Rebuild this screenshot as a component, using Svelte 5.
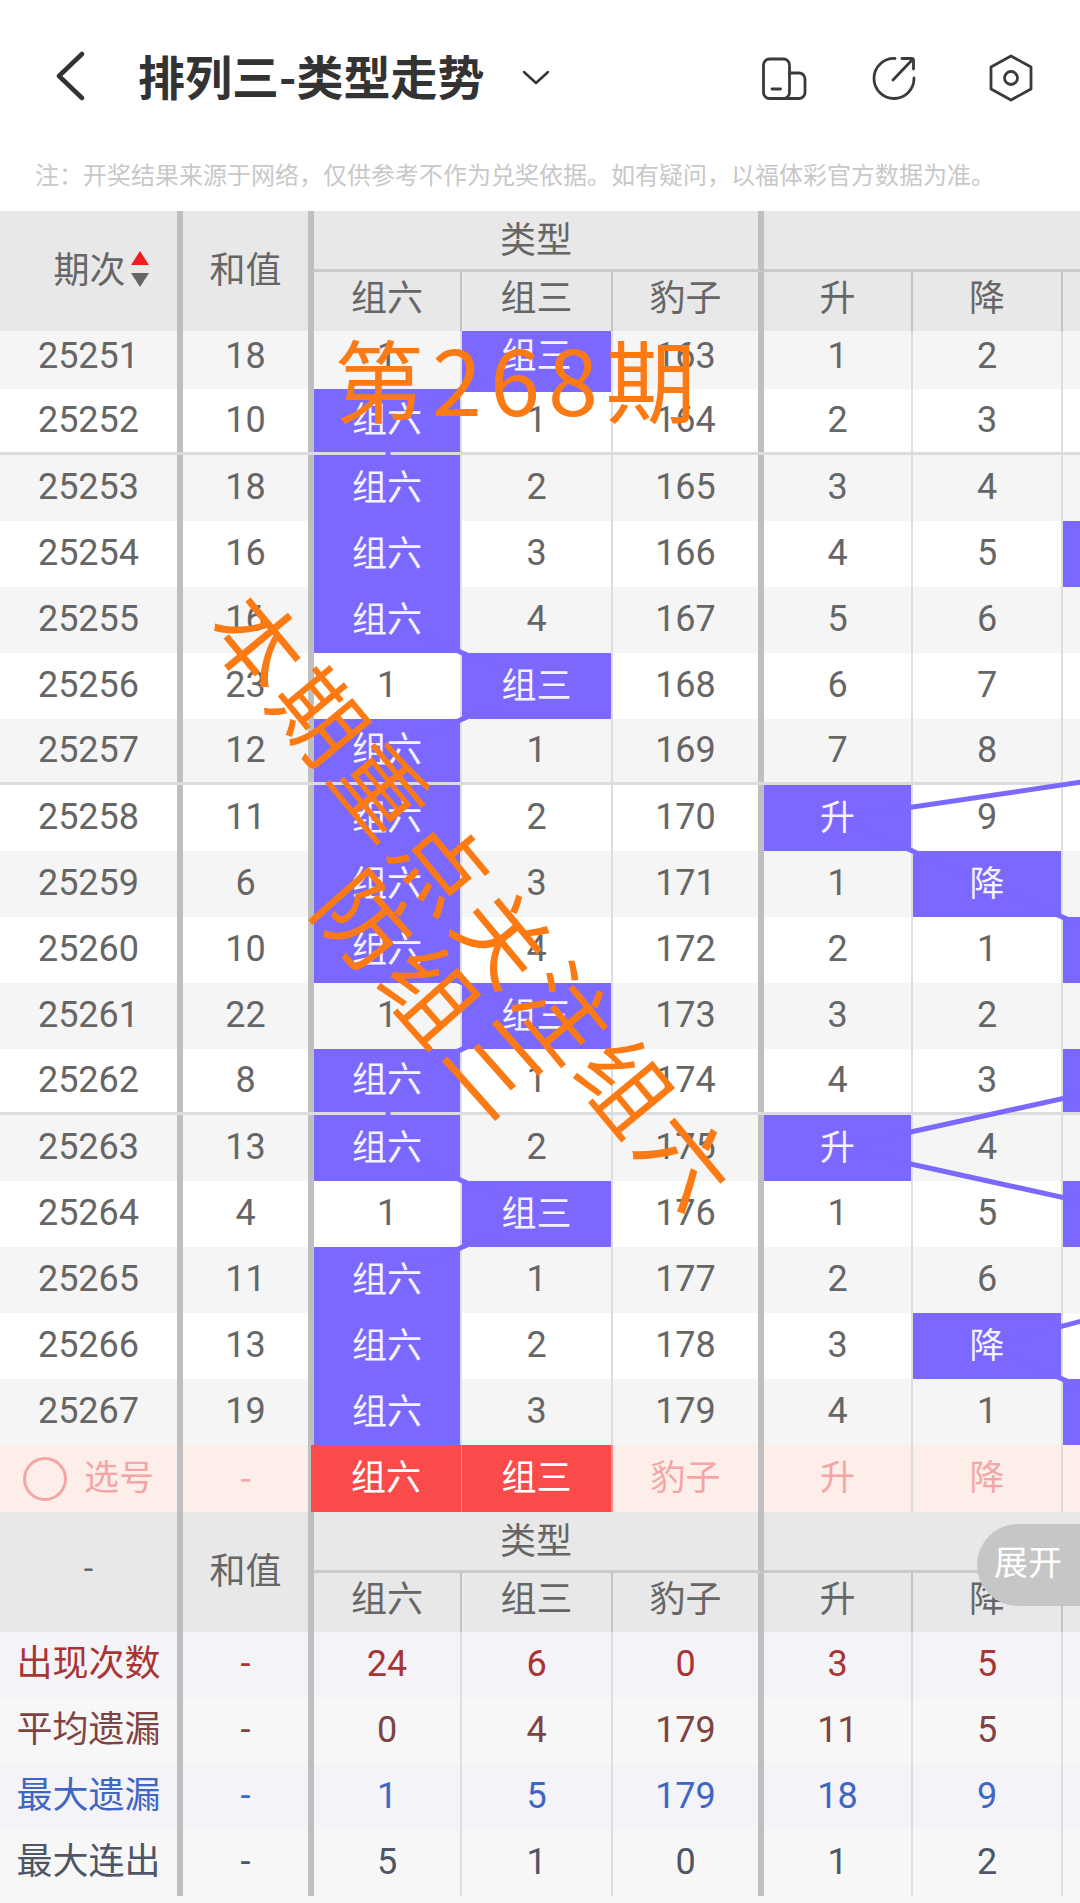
<script>
    // trend rows: hit marks the cell drawn in purple, everything else shows the miss count
    const rows = [
        [25251, 18, 1, "组三", 163, 1, 2],
        [25252, 10, "组六", 1, 164, 2, 3],
        [25253, 18, "组六", 2, 165, 3, 4],
        [25254, 16, "组六", 3, 166, 4, 5, true],
        [25255, 16, "组六", 4, 167, 5, 6],
        [25256, 23, 1, "组三", 168, 6, 7],
        [25257, 12, "组六", 1, 169, 7, 8],
        [25258, 11, "组六", 2, 170, "升", 9],
        [25259, 6, "组六", 3, 171, 1, "降"],
        [25260, 10, "组六", 4, 172, 2, 1, true],
        [25261, 22, 1, "组三", 173, 3, 2],
        [25262, 8, "组六", 1, 174, 4, 3, true],
        [25263, 13, "组六", 2, 175, "升", 4],
        [25264, 4, 1, "组三", 176, 1, 5, true],
        [25265, 11, "组六", 1, 177, 2, 6],
        [25266, 13, "组六", 2, 178, 3, "降"],
        [25267, 19, "组六", 3, 179, 4, 1, true],
    ];

    const stats = [
        { label: "出现次数", tone: "red", values: [24, 6, 0, 3, 5] },
        { label: "平均遗漏", tone: "brown", values: [0, 4, 179, 11, 5] },
        { label: "最大遗漏", tone: "blue", values: [1, 5, 179, 18, 9] },
        { label: "最大连出", tone: "slate", values: [5, 1, 0, 1, 2] },
    ];

    const subHeads = ["组六", "组三", "豹子", "升", "降"];

    // column centres in px, row centres relative to the top of the data block
    const colX = [388, 537, 686, 838, 987, 1138];
    const rowY = (i) => (i === 0 ? 25 : 58 + 66 * (i - 1) + 33);

    function isHit(v) {
        return typeof v === "string";
    }

    function hitCol(row) {
        return isHit(row[2]) ? 0 : 1;
    }

    let typeLinks = $derived(
        rows.slice(1).map((row, i) => ({
            x1: colX[hitCol(rows[i])],
            y1: rowY(i),
            x2: colX[hitCol(row)],
            y2: rowY(i + 1),
        })),
    );

    const trendLinks = [
        { x1: colX[3], y1: rowY(7), x2: colX[4], y2: rowY(8) },
        { x1: colX[4], y1: rowY(8), x2: colX[5], y2: rowY(9) },
        { x1: colX[5], y1: rowY(11), x2: colX[3], y2: rowY(12) },
        { x1: colX[3], y1: rowY(12), x2: colX[5], y2: rowY(13) },
        { x1: colX[4], y1: rowY(15), x2: colX[5], y2: rowY(16) },
        { x1: colX[3], y1: rowY(7), x2: 1082, y2: rowY(7) - 36 },
        { x1: colX[4], y1: rowY(15), x2: 1082, y2: rowY(15) - 25 },
    ];
</script>

{#snippet tableHead(first)}
    <div class="grid head">
        <div class="hc span-2 thick first-col">{@render first()}</div>
        <div class="hc span-2 thick">和值</div>
        <div class="hc group thick">类型</div>
        <div class="hc group rest"></div>
        {#each subHeads as title, i}
            <div class="hc sub" class:thick={i === 2}>{title}</div>
        {/each}
        <div class="hc sub noline"></div>
    </div>
{/snippet}

{#snippet sortTitle()}
    <span class="sort-title">期次</span>
    <svg class="sort" width="20" height="36" viewBox="0 0 20 36">
        <path d="M10 0 L19 14 H1 Z" fill="#ef1c1c" />
        <path d="M1 22 H19 L10 36 Z" fill="#666" />
    </svg>
{/snippet}

{#snippet dash()}
    <span class="dash">-</span>
{/snippet}

<div class="page">
    <header class="nav">
        <svg class="back" width="36" height="50" viewBox="0 0 36 50">
            <path d="M30 3 L7 25 L30 47" fill="none" stroke="#333" stroke-width="4.5" stroke-linecap="round" stroke-linejoin="round" />
        </svg>
        <h1 class="title">排列三-类型走势</h1>
        <svg class="caret" width="28" height="16" viewBox="0 0 28 16">
            <path d="M2 3 L14 14 L26 3" fill="none" stroke="#333" stroke-width="2.4" stroke-linecap="round" stroke-linejoin="round" />
        </svg>
        <svg class="icon first" width="48" height="48" viewBox="0 0 48 48" fill="none" stroke="#3a3a3a" stroke-width="2.8" stroke-linecap="round" stroke-linejoin="round">
            <rect x="3.5" y="5" width="26" height="39.5" rx="6" />
            <path d="M29.5 19 H39 a6 6 0 0 1 6 6 V38.5 a6 6 0 0 1 -6 6 H23" />
            <path d="M12 35 H20.5" />
        </svg>
        <svg class="icon" width="48" height="48" viewBox="0 0 48 48" fill="none" stroke="#3a3a3a" stroke-width="2.8" stroke-linecap="round" stroke-linejoin="round">
            <path d="M25 4.5 A20 20 0 1 0 44 24" />
            <path d="M23 26 L42.5 5.5" />
            <path d="M32 4.5 H41.5 a2 2 0 0 1 2 2 V15" />
        </svg>
        <svg class="icon last" width="48" height="48" viewBox="0 0 48 48" fill="none" stroke="#3a3a3a" stroke-width="2.8" stroke-linecap="round" stroke-linejoin="round">
            <path d="M24 2 L44 13 V35 L24 46 L4 35 V13 Z" />
            <circle cx="24" cy="24" r="6.5" />
        </svg>
    </header>

    <p class="note">注：开奖结果来源于网络，仅供参考不作为兑奖依据。如有疑问，以福体彩官方数据为准。</p>

    {@render tableHead(sortTitle)}

    <div class="data">
        {#each rows as row, i}
            <div class="grid row" class:odd={i % 2 === 0} class:cut={i === 0} class:mark={i % 5 === 1 && i < 16}>
                <div class="cell thick"><span>{row[0]}</span></div>
                <div class="cell thick"><span>{row[1]}</span></div>
                {#each row.slice(2, 7) as v, c}
                    <div class="cell" class:thick={c === 2} class:hit={isHit(v)}><span>{v}</span></div>
                {/each}
                <div class="cell noline" class:hit={row[7]}></div>
            </div>
        {/each}
        <svg class="links" width="1080" height="1114">
            {#each [...typeLinks, ...trendLinks] as l}
                <line x1={l.x1} y1={l.y1} x2={l.x2} y2={l.y2} stroke="#7b68ff" stroke-width="5" />
            {/each}
        </svg>
    </div>

    <div class="grid row pick">
        <div class="cell thick pick-label">
            <i class="ring"></i><span>选号</span>
        </div>
        <div class="cell thick"><span>-</span></div>
        <div class="cell on"><span>组六</span></div>
        <div class="cell on"><span>组三</span></div>
        <div class="cell thick"><span>豹子</span></div>
        <div class="cell"><span>升</span></div>
        <div class="cell"><span>降</span></div>
        <div class="cell noline"></div>
    </div>

    {@render tableHead(dash)}

    {#each stats as stat, i}
        <div class="grid row stat {stat.tone}" class:tint={i % 2 === 0}>
            <div class="cell thick stat-label"><span>{stat.label}</span></div>
            <div class="cell thick"><span>-</span></div>
            {#each stat.values as v, c}
                <div class="cell" class:thick={c === 2}><span>{v}</span></div>
            {/each}
            <div class="cell noline"></div>
        </div>
    {/each}
    <div class="tail"></div>

    <div class="expand">展开</div>

    <div class="ink ink-period">第268期</div>
    <div class="ink ink-focus">本期重点关注组六</div>
    <div class="ink ink-guard">防组三</div>
</div>

<style>
    :global(body) {
        margin: 0;
        background: #fff;
    }

    .page {
        position: relative;
        width: 1080px;
        height: 1903px;
        overflow: hidden;
        font-family: Roboto, "Noto Sans CJK SC", sans-serif;
        color: #666;
    }

    .nav {
        display: flex;
        align-items: center;
        height: 156px;
    }

    .back {
        margin: -4px 0 0 52px;
    }

    .title {
        margin: -8px 0 0 50px;
        font-family: "Noto Sans CJK SC", sans-serif;
        font-size: 47px;
        font-weight: 700;
        color: #333;
        white-space: nowrap;
    }

    .caret {
        margin: -2px 0 0 38px;
    }

    .icon {
        margin-left: 62px;
    }

    .icon.first {
        margin-left: auto;
    }

    .icon.last {
        margin: 0 45px 0 69px;
    }

    .note {
        margin: 0;
        height: 55px;
        padding-left: 35px;
        font-family: "Noto Sans CJK SC", sans-serif;
        font-size: 24px;
        line-height: 36px;
        color: #c8c8c8;
        white-space: nowrap;
    }

    .grid {
        display: grid;
        grid-template-columns: 183px 131px 148px 151px 151px 149px 150px 17px;
    }

    .head {
        grid-template-rows: 61px 59px;
        height: 120px;
        background: #e8e8e8;
        font-family: "Noto Sans CJK SC", sans-serif;
        font-size: 36px;
    }

    .hc {
        display: flex;
        align-items: center;
        justify-content: center;
        box-sizing: border-box;
        border-right: 2px solid #c4c4c4;
    }

    .hc.span-2 {
        grid-row: span 2;
        padding-bottom: 8px;
    }

    .hc.group {
        grid-column: span 3;
        border-bottom: 3px solid #cacaca;
        padding-bottom: 7px;
    }

    .hc.sub {
        padding-bottom: 13px;
    }

    .hc.thick,
    .cell.thick {
        border-right: 6px solid #bfbfbf;
    }

    .hc.rest,
    .hc.noline,
    .cell.noline {
        border-right: 0;
    }

    .first-col {
        gap: 4px;
        padding-left: 26px;
    }

    .sort {
        margin-top: 4px;
    }

    .dash {
        margin-left: -26px;
        font-family: Roboto, sans-serif;
        font-size: 34px;
    }

    .data {
        position: relative;
    }

    .links {
        position: absolute;
        top: 0;
        left: 0;
        z-index: 1;
        pointer-events: none;
    }

    .row {
        height: 66px;
        box-sizing: border-box;
        font-size: 36px;
        background: #fff;
    }

    .row.odd {
        background: #f5f5f5;
    }

    .row.cut {
        height: 58px;
    }

    .row.cut .cell {
        padding-bottom: 10px;
    }

    .row.mark {
        border-bottom: 3px solid #dcdcdc;
    }

    .cell {
        display: flex;
        align-items: center;
        justify-content: center;
        box-sizing: border-box;
        border-right: 2px solid #dedede;
        min-width: 0;
    }

    .cell span {
        position: relative;
        top: -1px;
        z-index: 2;
    }

    .cell.hit {
        background: #7b68ff;
        color: #f4f2ff;
        font-family: "Noto Sans CJK SC", sans-serif;
        font-size: 35px;
    }

    .cell.hit span {
        top: -4px;
    }

    .row.pick {
        height: 67px;
        background: #fdeee9;
        color: #f4a6a6;
        font-family: "Noto Sans CJK SC", sans-serif;
        font-size: 35px;
    }

    .row.pick .cell span {
        top: -4px;
    }

    .pick-label {
        justify-content: flex-start;
        padding-left: 23px;
        gap: 17px;
    }

    .ring {
        width: 44px;
        height: 44px;
        box-sizing: border-box;
        border: 3px solid #f4a6a6;
        border-radius: 50%;
    }

    .cell.on {
        margin-left: -3px;
        width: calc(100% + 3px);
        background: #fb4a4a;
        border-right: 1px solid #f78c8c;
        color: #fff;
    }

    .cell.on + .cell.on {
        margin-left: 0;
        width: auto;
        border-right: 2px solid #f78c8c;
    }

    .row.stat {
        background: #f7f7f7;
        height: 66px;
    }

    .row.stat.tint {
        background: #f3f3f8;
    }

    .stat-label {
        font-family: "Noto Sans CJK SC", sans-serif;
        font-size: 36px;
    }

    .stat-label span {
        top: -5px;
    }

    .red {
        color: #a93434;
    }

    .brown {
        color: #7f4343;
    }

    .blue {
        color: #3f66c4;
    }

    .slate {
        color: #4d5566;
    }

    .tail {
        height: 9px;
        background: #f8f8f8;
    }

    .expand {
        position: absolute;
        z-index: 4;
        top: 1524px;
        left: 977px;
        width: 103px;
        height: 82px;
        box-sizing: border-box;
        padding-left: 17px;
        border-radius: 41px 0 0 41px;
        background: #c6c6c6;
        color: #fff;
        font-family: "Noto Sans CJK SC", sans-serif;
        font-size: 34px;
        line-height: 74px;
        white-space: nowrap;
    }

    .ink {
        position: absolute;
        z-index: 5;
        color: #fb7a14;
        font-family: "Noto Sans CJK SC", sans-serif;
        font-weight: 400;
        white-space: nowrap;
        line-height: 1;
    }

    .ink-period {
        top: 332px;
        left: 334px;
        font-size: 90px;
        letter-spacing: 8px;
    }

    .ink-focus {
        top: 900px;
        left: 478px;
        font-size: 90px;
        letter-spacing: 6px;
        transform: translate(-50%, -50%) rotate(50.4deg);
    }

    .ink-guard {
        top: 993px;
        left: 436px;
        font-size: 92px;
        letter-spacing: 6px;
        transform: translate(-50%, -50%) rotate(48.4deg);
    }
</style>
